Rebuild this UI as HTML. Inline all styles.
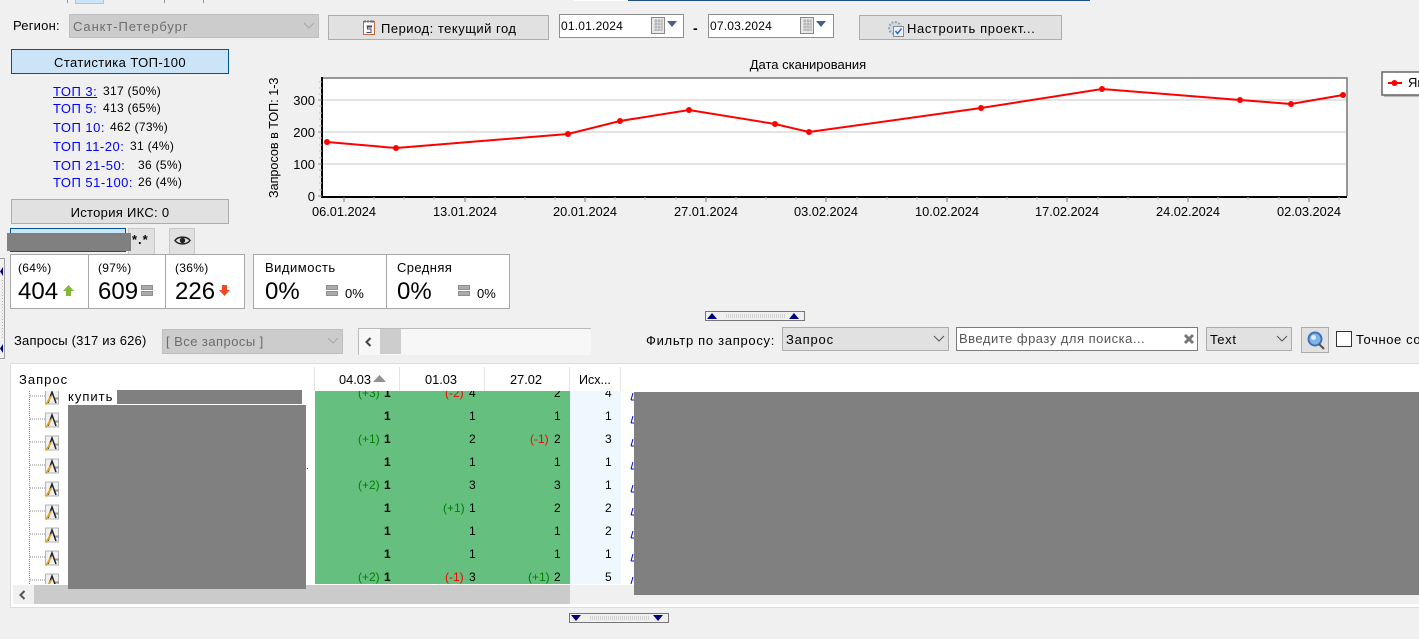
<!DOCTYPE html>
<html lang="ru"><head><meta charset="utf-8"><title>Статистика</title>
<style>
html,body{margin:0;padding:0;width:1419px;height:639px;overflow:hidden;background:#f0f0f0}
body{position:relative;font-family:"Liberation Sans",sans-serif;font-size:12px;color:#000}
.b,.t,svg.a{position:absolute;box-sizing:border-box}
.t{white-space:nowrap;line-height:14px}
.btn{background:#e1e1e1;border:1px solid #adadad}
.c{text-align:center}
.l{color:#0000ff;font-size:13px;letter-spacing:.5px}
.v{letter-spacing:.3px}
.g{color:#008000}
.e{color:#ff0000}
.m{background:#808080}
.big{font-size:24px;line-height:30px}
.eq{background:#aaa;border:1px solid #8f8f8f;width:12px;height:5px}
</style></head><body>
<!-- top tabs -->
<div class="b" style="left:67px;top:0;width:1px;height:3px;background:#999"></div>
<div class="b" style="left:75px;top:0;width:29px;height:4px;background:#cce4f7;border:1px solid #a9c8e4;border-top:0"></div>
<div class="b" style="left:164px;top:0;width:1px;height:3px;background:#999"></div>
<div class="b" style="left:203px;top:0;width:1px;height:3px;background:#999"></div>
<div class="b" style="left:574px;top:0;width:54px;height:1px;background:#fff"></div>
<div class="b" style="left:628px;top:0;width:462px;height:1px;background:#1f4e83"></div>

<div class="t" style="left:13px;top:19px;font-size:13px;letter-spacing:.2px">Регион:</div>
<div class="b" style="left:69px;top:14px;width:250px;height:24px;background:#ccc;border:1px solid #bfbfbf"></div>
<div class="t" style="left:73px;top:20px;color:#6d6d6d;font-size:13px;letter-spacing:.9px">Санкт-Петербург</div>
<svg class="a" style="left:303px;top:22px" width="12" height="8"><path d="M1 1l5 5 5-5" fill="none" stroke="#a8a8a8"/></svg>

<div class="b btn" style="left:328px;top:15px;width:221px;height:25px"></div>
<svg class="a" style="left:362px;top:19px" width="14" height="17"><rect x="1.5" y="2.5" width="11" height="13" fill="#fff" stroke="#c0683a"/><path d="M3 1v3M6 1v3M9 1v3M11 1v3" stroke="#667"/><path d="M4.500 7h5v1H5.500v2h3.500v3.500H4.500" fill="none" stroke="#446"/></svg>
<div class="t" style="left:381px;top:22px;font-size:13px;letter-spacing:.5px">Период: текущий год</div>

<div class="b" style="left:559px;top:14px;width:125px;height:24px;background:#fff;border:1px solid #8f8f8f"></div>
<div class="t" style="left:561px;top:19px;letter-spacing:.2px">01.01.2024</div>
<svg class="a" style="left:651px;top:16px" width="30" height="20"><rect x="0.500" y="1.500" width="13" height="16" fill="#e8e8e8" stroke="#888"/><path d="M3 5h8M3 8h8M3 11h8M3 14h8M5 3v12M8 3v12M11 3v12" stroke="#aaa"/><path d="M16 5h10l-5 6z" fill="#44618c"/></svg>
<div class="t" style="left:693px;top:21px;font-weight:bold;font-size:14px">-</div>
<div class="b" style="left:708px;top:14px;width:126px;height:24px;background:#fff;border:1px solid #8f8f8f"></div>
<div class="t" style="left:710px;top:19px;letter-spacing:.2px">07.03.2024</div>
<svg class="a" style="left:800px;top:16px" width="30" height="20"><rect x="0.500" y="1.500" width="13" height="16" fill="#e8e8e8" stroke="#888"/><path d="M3 5h8M3 8h8M3 11h8M3 14h8M5 3v12M8 3v12M11 3v12" stroke="#aaa"/><path d="M16 5h10l-5 6z" fill="#44618c"/></svg>

<div class="b btn" style="left:859px;top:15px;width:203px;height:25px"></div>
<svg class="a" style="left:887px;top:20px" width="18" height="18"><circle cx="8" cy="8" r="6" fill="#cfd8de" stroke="#8fa9bb" stroke-width="2" stroke-dasharray="2 1.500"/><rect x="6.500" y="6.500" width="10" height="10" fill="#eef" stroke="#8a8a8a"/><path d="M8.500 11l2 2.500 4-5" fill="none" stroke="#2a6fb5" stroke-width="1.500"/></svg>
<div class="t" style="left:907px;top:22px;font-size:13px;letter-spacing:.6px">Настроить проект...</div>

<!-- left panel -->
<div class="b c" style="left:11px;top:49px;width:218px;height:25px;background:#cce4f7;border:1px solid #005499;line-height:25px;font-size:13px;letter-spacing:.4px">Статистика ТОП-100</div>
<div class="t l" style="left:53px;top:85px;text-decoration:underline">ТОП 3:</div><div class="t v" style="left:103px;top:84px">317 (50%)</div>
<div class="t l" style="left:53px;top:102px">ТОП 5:</div><div class="t v" style="left:103px;top:101px">413 (65%)</div>
<div class="t l" style="left:53px;top:121px">ТОП 10:</div><div class="t v" style="left:110px;top:120px">462 (73%)</div>
<div class="t l" style="left:53px;top:140px">ТОП 11-20:</div><div class="t v" style="left:130px;top:139px">31 (4%)</div>
<div class="t l" style="left:53px;top:159px">ТОП 21-50:</div><div class="t v" style="left:138px;top:158px">36 (5%)</div>
<div class="t l" style="left:53px;top:176px">ТОП 51-100:</div><div class="t v" style="left:138px;top:175px">26 (4%)</div>
<div class="b btn c" style="left:11px;top:199px;width:218px;height:25px;line-height:25px;font-size:13px;letter-spacing:.3px">История ИКС: 0</div>

<div class="b" style="left:10px;top:228px;width:116px;height:24px;background:#cce4f7;border:1px solid #005499"></div>
<div class="b" style="left:128px;top:228px;width:27px;height:27px;background:#e1e1e1;border:1px solid #c8c8c8"></div>
<div class="t" style="left:132px;top:233px;font-weight:bold;font-size:13px;letter-spacing:1px">*.*</div>
<div class="b" style="left:169px;top:228px;width:26px;height:27px;background:#e1e1e1;border:1px solid #c8c8c8"></div>
<svg class="a" style="left:174px;top:234px" width="17" height="13"><path d="M1 6.500C4 2 13 2 16 6.500 13 11 4 11 1 6.500z" fill="none" stroke="#222" stroke-width="1.500"/><circle cx="8.500" cy="6.500" r="2.700" fill="#222"/></svg>
<div class="b m" style="left:7px;top:233px;width:124px;height:18px"></div>

<!-- left splitter -->
<div class="b" style="left:0;top:258px;width:5px;height:101px;border-right:1px solid #a0a0a0;border-top:1px solid #a0a0a0;border-bottom:1px solid #a0a0a0"></div>
<svg class="a" style="left:0;top:266px" width="4" height="90"><path d="M3 1v9L0 5.500zM3 78v9L0 82.500z" fill="#00007f"/><path d="M2.500 14v60" stroke="#b5b5b5" stroke-dasharray="1 2"/></svg>

<!-- stat box 1 -->
<div class="b" style="left:10px;top:254px;width:235px;height:55px;background:#fff;border:1px solid #a8a8a8"></div>
<div class="b" style="left:88px;top:254px;width:1px;height:55px;background:#a8a8a8"></div>
<div class="b" style="left:165px;top:254px;width:1px;height:55px;background:#a8a8a8"></div>
<div class="t v" style="left:18px;top:261px">(64%)</div><div class="t big" style="left:18px;top:277px">404</div>
<svg class="a" style="left:62px;top:284px" width="13" height="13"><path d="M6.500 1L12 7H9v5H4V7H1z" fill="#82b83a"/></svg>
<div class="t v" style="left:98px;top:261px">(97%)</div><div class="t big" style="left:98px;top:277px">609</div>
<div class="b eq" style="left:141px;top:285px"></div><div class="b eq" style="left:141px;top:291px"></div>
<div class="t v" style="left:175px;top:261px">(36%)</div><div class="t big" style="left:175px;top:277px">226</div>
<svg class="a" style="left:218px;top:284px" width="13" height="13"><path d="M4 1h5v5h3l-5.500 6L1 6h3z" fill="#f04a24"/></svg>

<!-- stat box 2 -->
<div class="b" style="left:253px;top:254px;width:257px;height:55px;background:#fff;border:1px solid #a8a8a8"></div>
<div class="b" style="left:386px;top:254px;width:1px;height:55px;background:#a8a8a8"></div>
<div class="t" style="left:265px;top:261px;font-size:13px;letter-spacing:.5px">Видимость</div><div class="t big" style="left:265px;top:277px">0%</div>
<div class="b eq" style="left:326px;top:285px"></div><div class="b eq" style="left:326px;top:291px"></div>
<div class="t" style="left:345px;top:287px;font-size:13px">0%</div>
<div class="t" style="left:397px;top:261px;font-size:13px;letter-spacing:.4px">Средняя</div><div class="t big" style="left:397px;top:277px">0%</div>
<div class="b eq" style="left:458px;top:285px"></div><div class="b eq" style="left:458px;top:291px"></div>
<div class="t" style="left:477px;top:287px;font-size:13px">0%</div>

<!-- chart -->
<svg class="a" style="left:260px;top:50px;font-family:'Liberation Sans',sans-serif;font-size:12.800px" width="1159" height="180">
<text x="548" y="19" text-anchor="middle" font-size="13">Дата сканирования</text>
<rect x="63" y="28" width="1024" height="118" fill="#fff"/>
<path d="M63 50h1024M63 82h1024M63 114h1024" stroke="#dcdcdc" stroke-width="1.500"/>
<path d="M63 28h1024v118" fill="none" stroke="#777" stroke-width="1.500"/>
<path d="M62 27v120h1025" fill="none" stroke="#000" stroke-width="2"/>
<path d="M58 50h4M58 82h4M58 114h4M58 146h4" stroke="#888"/>
<path d="M59 32h3M59 38h3M59 44h3M59 56h3M59 63h3M59 69h3M59 76h3M59 88h3M59 95h3M59 101h3M59 108h3M59 120h3M59 127h3M59 133h3M59 140h3" stroke="#bbb"/>
<path d="M84 147v5M205 147v5M325 147v5M446 147v5M566 147v5M687 147v5M807 147v5M928 147v5M1049 147v5" stroke="#777"/>
<path d="M114 147v3M144 147v3M174 147v3M235 147v3M265 147v3M295 147v3M355 147v3M385 147v3M416 147v3M476 147v3M506 147v3M536 147v3M597 147v3M627 147v3M657 147v3M717 147v3M747 147v3M777 147v3M838 147v3M868 147v3M898 147v3M958 147v3M988 147v3M1019 147v3M1079 147v3" stroke="#bbb"/>
<g text-anchor="end" font-size="13"><text x="55" y="55">300</text><text x="55" y="87">200</text><text x="55" y="119">100</text><text x="55" y="151">0</text></g>
<g text-anchor="middle"><text x="84" y="166">06.01.2024</text><text x="205" y="166">13.01.2024</text><text x="325" y="166">20.01.2024</text><text x="446" y="166">27.01.2024</text><text x="566" y="166">03.02.2024</text><text x="687" y="166">10.02.2024</text><text x="807" y="166">17.02.2024</text><text x="928" y="166">24.02.2024</text><text x="1049" y="166">02.03.2024</text></g>
<text transform="translate(18 148) rotate(-90)" font-size="12.600">Запросов в ТОП: 1-3</text>
<polyline points="67,92 136,98 308,84 360,71 429,60 515,74 549,82 721,58 842,39 980,50 1031,54 1083,45" fill="none" stroke="#f00" stroke-width="2"/>
<g fill="#f00"><circle cx="67" cy="92" r="3"/><circle cx="136" cy="98" r="3"/><circle cx="308" cy="84" r="3"/><circle cx="360" cy="71" r="3"/><circle cx="429" cy="60" r="3"/><circle cx="515" cy="74" r="3"/><circle cx="549" cy="82" r="3"/><circle cx="721" cy="58" r="3"/><circle cx="842" cy="39" r="3"/><circle cx="980" cy="50" r="3"/><circle cx="1031" cy="54" r="3"/><circle cx="1083" cy="45" r="3"/></g>
<rect x="1124" y="24" width="40" height="23" fill="#bbb"/>
<rect x="1122" y="22" width="40" height="23" fill="#fff" stroke="#666" stroke-width="1.500"/>
<path d="M1128 33h14" stroke="#f00" stroke-width="2"/><circle cx="1134.500" cy="33" r="3" fill="#f00"/>
<text x="1148" y="37" font-size="13">Яндекс</text>
</svg>

<!-- horizontal splitter top -->
<div class="b" style="left:705px;top:311px;width:100px;height:10px;border:1px solid #777;background:#f0f0f0"></div>
<svg class="a" style="left:706px;top:312px" width="98" height="8"><path d="M6 1l5 6H1zM88 1l5 6H83z" fill="#00007f"/><path d="M20 3h60M20 5h60" stroke="#b5b5b5" stroke-dasharray="1 1"/></svg>

<!-- filter row -->
<div class="t" style="left:14px;top:334px;font-size:13px;letter-spacing:.2px">Запросы (317 из 626)</div>
<div class="b" style="left:162px;top:329px;width:181px;height:25px;background:#ccc;border:1px solid #bfbfbf"></div>
<div class="t" style="left:166px;top:335px;color:#6d6d6d;font-size:13px;letter-spacing:.45px">[ Все запросы ]</div>
<svg class="a" style="left:327px;top:337px" width="12" height="8"><path d="M1 1l5 5 5-5" fill="none" stroke="#a8a8a8"/></svg>
<div class="b" style="left:358px;top:328px;width:233px;height:27px;background:#f7f7f7;border-left:1px solid #bbb;border-top:1px solid #bbb"></div>
<div class="b" style="left:380px;top:329px;width:21px;height:25px;background:#cdcdcd"></div>
<svg class="a" style="left:364px;top:337px" width="10" height="10"><path d="M6.500 1L2.500 5l4 4" fill="none" stroke="#444" stroke-width="2"/></svg>

<div class="t" style="left:646px;top:334px;font-size:13px;letter-spacing:.7px">Фильтр по запросу:</div>
<div class="b" style="left:782px;top:327px;width:167px;height:24px;background:#e1e1e1;border:1px solid #adadad"></div>
<div class="t" style="left:786px;top:333px;font-size:13px;letter-spacing:.8px">Запрос</div>
<svg class="a" style="left:933px;top:335px" width="12" height="8"><path d="M1 1l5 5 5-5" fill="none" stroke="#555"/></svg>
<div class="b" style="left:956px;top:327px;width:242px;height:24px;background:#fff;border:1px solid #7a7a7a"></div>
<div class="t" style="left:959px;top:332px;color:#555;font-size:13px;letter-spacing:.5px">Введите фразу для поиска...</div>
<svg class="a" style="left:1183px;top:333px" width="12" height="12"><path d="M2 2l8 8M10 2l-8 8" stroke="#777" stroke-width="3"/></svg>
<div class="b" style="left:1206px;top:327px;width:86px;height:24px;background:#e1e1e1;border:1px solid #adadad"></div>
<div class="t" style="left:1210px;top:333px;font-size:13px;letter-spacing:.7px">Text</div>
<svg class="a" style="left:1276px;top:335px" width="12" height="8"><path d="M1 1l5 5 5-5" fill="none" stroke="#555"/></svg>
<div class="b" style="left:1301px;top:327px;width:28px;height:26px;background:#e1e1e1;border:1px solid #adadad"></div>
<svg class="a" style="left:1305px;top:330px" width="21" height="21"><circle cx="10" cy="9" r="6.500" fill="#7fb4e6" stroke="#3f74b5" stroke-width="2"/><circle cx="8.500" cy="7.500" r="2.500" fill="#dcecfb"/><path d="M14 14l5 5" stroke="#555" stroke-width="2"/></svg>
<div class="b" style="left:1336px;top:331px;width:16px;height:16px;background:#fff;border:1px solid #333"></div>
<div style="position:absolute;left:1356px;top:333px;width:63px;height:14px;overflow:hidden;line-height:14px;white-space:nowrap;font-size:13px;letter-spacing:.6px">Точное соответствие</div>

<!-- table -->
<div class="b" style="left:10px;top:363px;width:1409px;height:245px;background:#fff;border:1px solid #dcdcdc;border-right:0"></div>
<div class="t" style="left:19px;top:373px;font-size:13px;letter-spacing:1px">Запрос</div>
<div class="b" style="left:314px;top:367px;width:1px;height:24px;background:#e5e5e5"></div>
<div class="t" style="left:339px;top:373px;font-size:12.800px">04.03</div>
<svg class="a" style="left:373px;top:375px" width="13" height="7"><path d="M6.500 0L13 7H0z" fill="#909090"/></svg>
<div class="b" style="left:399px;top:367px;width:1px;height:24px;background:#e5e5e5"></div>
<div class="t" style="left:425px;top:373px;font-size:12.800px">01.03</div>
<div class="b" style="left:484px;top:367px;width:1px;height:24px;background:#e5e5e5"></div>
<div class="t" style="left:510px;top:373px;font-size:12.800px">27.02</div>
<div class="b" style="left:569px;top:367px;width:1px;height:24px;background:#e5e5e5"></div>
<div class="t" style="left:579px;top:373px;font-size:12.500px">Исх...</div>
<div class="b" style="left:620px;top:367px;width:1px;height:24px;background:#e5e5e5"></div>

<div class="b" style="left:315px;top:391px;width:255px;height:193px;background:#65bf7e"></div>
<div class="b" style="left:570px;top:391px;width:51px;height:193px;background:#f0f8ff"></div>

<!-- tree lines -->
<div class="b" style="left:29px;top:391px;width:0;height:193px;border-left:1px dotted #888"></div>
<svg class="a" style="left:30px;top:391px" width="16" height="193"><path d="M0 5h16M0 28h16M0 51h16M0 74h16M0 97h16M0 120h16M0 143h16M0 166h16M0 189h16" stroke="#888" stroke-dasharray="1 1"/></svg>
<!-- A icons -->
<div style="position:absolute;left:45px;top:391px;width:15px;height:193px;overflow:hidden">
<svg style="position:absolute;left:0;top:-2px" width="15" height="200" fill="none">
<g><rect x=".5" y="1" width="13" height="14" fill="#f0f0f0" stroke="#b5b5b5"/><path d="M9 9.500h5" stroke="#999" stroke-width="2"/><path d="M3 14L7 3l4 11" stroke="#222" stroke-width="1.500"/><path d="M1 15.500l5-8" stroke="#e0a020" stroke-width="1.800"/></g>
<g transform="translate(0 23)"><rect x=".5" y="1" width="13" height="14" fill="#f0f0f0" stroke="#b5b5b5"/><path d="M9 9.500h5" stroke="#999" stroke-width="2"/><path d="M3 14L7 3l4 11" stroke="#222" stroke-width="1.500"/><path d="M1 15.500l5-8" stroke="#e0a020" stroke-width="1.800"/></g>
<g transform="translate(0 46)"><rect x=".5" y="1" width="13" height="14" fill="#f0f0f0" stroke="#b5b5b5"/><path d="M9 9.500h5" stroke="#999" stroke-width="2"/><path d="M3 14L7 3l4 11" stroke="#222" stroke-width="1.500"/><path d="M1 15.500l5-8" stroke="#e0a020" stroke-width="1.800"/></g>
<g transform="translate(0 69)"><rect x=".5" y="1" width="13" height="14" fill="#f0f0f0" stroke="#b5b5b5"/><path d="M9 9.500h5" stroke="#999" stroke-width="2"/><path d="M3 14L7 3l4 11" stroke="#222" stroke-width="1.500"/><path d="M1 15.500l5-8" stroke="#e0a020" stroke-width="1.800"/></g>
<g transform="translate(0 92)"><rect x=".5" y="1" width="13" height="14" fill="#f0f0f0" stroke="#b5b5b5"/><path d="M9 9.500h5" stroke="#999" stroke-width="2"/><path d="M3 14L7 3l4 11" stroke="#222" stroke-width="1.500"/><path d="M1 15.500l5-8" stroke="#e0a020" stroke-width="1.800"/></g>
<g transform="translate(0 115)"><rect x=".5" y="1" width="13" height="14" fill="#f0f0f0" stroke="#b5b5b5"/><path d="M9 9.500h5" stroke="#999" stroke-width="2"/><path d="M3 14L7 3l4 11" stroke="#222" stroke-width="1.500"/><path d="M1 15.500l5-8" stroke="#e0a020" stroke-width="1.800"/></g>
<g transform="translate(0 138)"><rect x=".5" y="1" width="13" height="14" fill="#f0f0f0" stroke="#b5b5b5"/><path d="M9 9.500h5" stroke="#999" stroke-width="2"/><path d="M3 14L7 3l4 11" stroke="#222" stroke-width="1.500"/><path d="M1 15.500l5-8" stroke="#e0a020" stroke-width="1.800"/></g>
<g transform="translate(0 161)"><rect x=".5" y="1" width="13" height="14" fill="#f0f0f0" stroke="#b5b5b5"/><path d="M9 9.500h5" stroke="#999" stroke-width="2"/><path d="M3 14L7 3l4 11" stroke="#222" stroke-width="1.500"/><path d="M1 15.500l5-8" stroke="#e0a020" stroke-width="1.800"/></g>
<g transform="translate(0 184)"><rect x=".5" y="1" width="13" height="14" fill="#f0f0f0" stroke="#b5b5b5"/><path d="M9 9.500h5" stroke="#999" stroke-width="2"/><path d="M3 14L7 3l4 11" stroke="#222" stroke-width="1.500"/><path d="M1 15.500l5-8" stroke="#e0a020" stroke-width="1.800"/></g>
</svg></div>

<div class="t" style="left:68px;top:390px;font-size:13px;letter-spacing:1px">купить</div>

<!-- cell data: clipped table body -->
<div style="position:absolute;left:315px;top:391px;width:306px;height:193px;overflow:hidden">
<div class="t g" style="left:43px;top:-5px">(+3)</div><div class="t" style="left:69px;top:-5px;font-weight:bold">1</div>
<div class="t e" style="left:130px;top:-5px">(-2)</div><div class="t" style="left:154px;top:-5px">4</div>
<div class="t" style="left:239px;top:-5px">2</div><div class="t" style="left:290px;top:-5px">4</div>

<div class="t" style="left:69px;top:18px;font-weight:bold">1</div><div class="t" style="left:154px;top:18px">1</div><div class="t" style="left:239px;top:18px">1</div><div class="t" style="left:290px;top:18px">1</div>

<div class="t g" style="left:43px;top:41px">(+1)</div><div class="t" style="left:69px;top:41px;font-weight:bold">1</div><div class="t" style="left:154px;top:41px">2</div><div class="t e" style="left:215px;top:41px">(-1)</div><div class="t" style="left:239px;top:41px">2</div><div class="t" style="left:290px;top:41px">3</div>

<div class="t" style="left:69px;top:64px;font-weight:bold">1</div><div class="t" style="left:154px;top:64px">1</div><div class="t" style="left:239px;top:64px">1</div><div class="t" style="left:290px;top:64px">1</div>

<div class="t g" style="left:43px;top:87px">(+2)</div><div class="t" style="left:69px;top:87px;font-weight:bold">1</div><div class="t" style="left:154px;top:87px">3</div><div class="t" style="left:239px;top:87px">3</div><div class="t" style="left:290px;top:87px">1</div>

<div class="t" style="left:69px;top:110px;font-weight:bold">1</div><div class="t g" style="left:128px;top:110px">(+1)</div><div class="t" style="left:154px;top:110px">1</div><div class="t" style="left:239px;top:110px">2</div><div class="t" style="left:290px;top:110px">2</div>

<div class="t" style="left:69px;top:133px;font-weight:bold">1</div><div class="t" style="left:154px;top:133px">1</div><div class="t" style="left:239px;top:133px">1</div><div class="t" style="left:290px;top:133px">2</div>

<div class="t" style="left:69px;top:156px;font-weight:bold">1</div><div class="t" style="left:154px;top:156px">1</div><div class="t" style="left:239px;top:156px">1</div><div class="t" style="left:290px;top:156px">1</div>

<div class="t g" style="left:43px;top:179px">(+2)</div><div class="t" style="left:69px;top:179px;font-weight:bold">1</div><div class="t e" style="left:130px;top:179px">(-1)</div><div class="t" style="left:154px;top:179px">3</div><div class="t g" style="left:213px;top:179px">(+1)</div><div class="t" style="left:239px;top:179px">2</div><div class="t" style="left:290px;top:179px">5</div>
</div>

<!-- link stubs -->
<svg class="a" style="left:630px;top:391px" width="5" height="193"><path d="M1 9l2-7M1 9h4M1 32l2-7M1 32h4M1 55l2-7M1 55h4M1 78l2-7M1 78h4M1 101l2-7M1 101h4M1 124l2-7M1 124h4M1 147l2-7M1 147h4M1 170l2-7M1 170h4M1 193l2-7" stroke="#0000e0" fill="none"/></svg>

<!-- table scrollbar -->
<div class="b" style="left:13px;top:585px;width:1406px;height:19px;background:#f0f0f0"></div>
<div class="b" style="left:34px;top:585px;width:536px;height:19px;background:#cbcbcb"></div>
<svg class="a" style="left:18px;top:590px" width="10" height="10"><path d="M6.500 1L2.500 5l4 4" fill="none" stroke="#555" stroke-width="2"/></svg>

<!-- masks -->
<div class="b m" style="left:117px;top:390px;width:185px;height:14px"></div>
<div class="b m" style="left:68px;top:405px;width:238px;height:184px"></div>
<div class="b m" style="left:634px;top:392px;width:785px;height:203px"></div>
<div class="b" style="left:307px;top:468px;width:1px;height:1px;background:#222"></div>

<!-- bottom splitter -->
<div class="b" style="left:569px;top:613px;width:100px;height:10px;border:1px solid #777;background:#f0f0f0"></div>
<svg class="a" style="left:570px;top:614px" width="98" height="8"><path d="M6 7l5-6H1zM88 7l5-6H83z" fill="#00007f"/><path d="M20 3h60M20 5h60" stroke="#b5b5b5" stroke-dasharray="1 1"/></svg>
</body></html>
